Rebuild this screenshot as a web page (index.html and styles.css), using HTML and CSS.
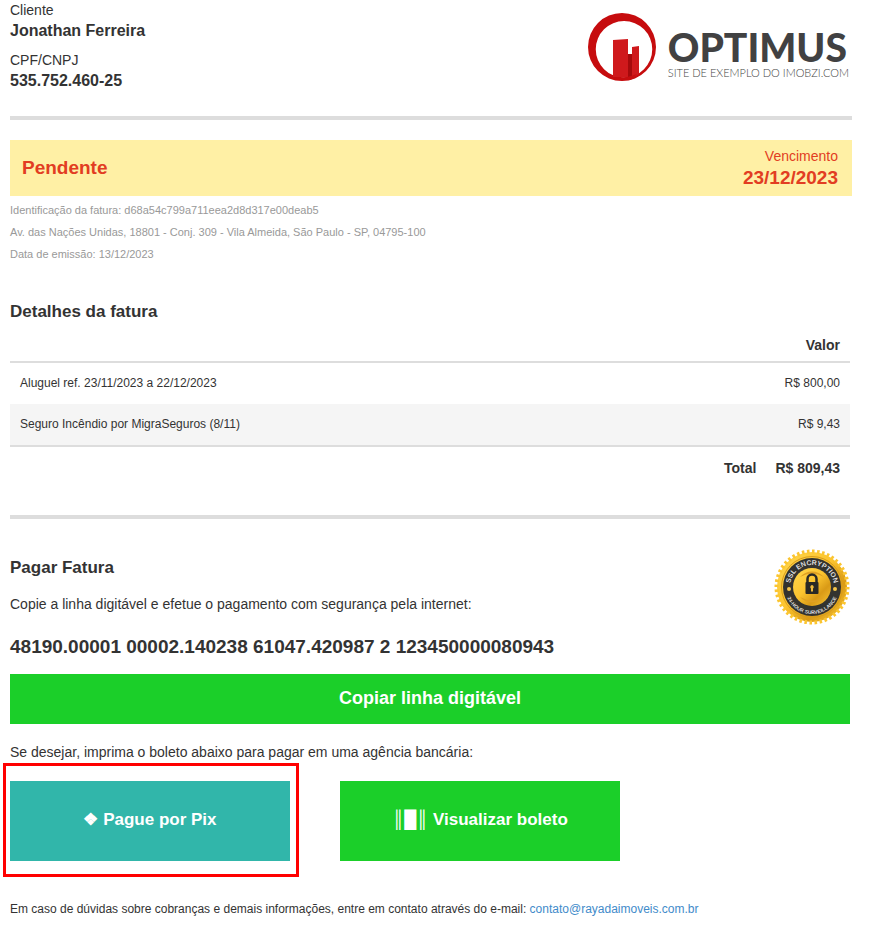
FILE: index.html
```html
<!DOCTYPE html>
<html lang="pt-BR">
<head>
<meta charset="utf-8">
<meta name="viewport" content="width=device-width, initial-scale=1">
<title>Fatura</title>
<link rel="stylesheet" href="styles.css">
</head>
<body>
<main class="page">
  <header class="header">
    <dl class="client">
      <dt>Cliente</dt><dd>Jonathan Ferreira</dd>
      <dt>CPF/CNPJ</dt><dd>535.752.460-25</dd>
    </dl>
    <div class="brand">
      <svg class="brand-mark" viewBox="0 0 68 68" aria-hidden="true">
        <defs><clipPath id="disc"><circle cx="34" cy="34" r="34"/></clipPath></defs>
        <path fill="#c60c0e" fill-rule="evenodd" d="M34 0a34 34 0 1 0 0 68a34 34 0 0 0 0-68zM36 8a28 28 0 1 1 0 56.500a28 28 0 0 1 0-56.500z"/>
        <g clip-path="url(#disc)">
          <path fill="#cf191c" d="M25 27l15-1v38H25z"/>
          <path fill="#a50a0c" d="M40 41h4v24h-4z"/>
          <path fill="#cf191c" d="M44 34l7-1v28l-7 4z"/>
          <path fill="#c60c0e" d="M25 64q12 2 24-3l-6 6H28z"/>
        </g>
      </svg>
      <div class="brand-text">
        <span class="brand-name">OPTIMUS</span>
        <span class="brand-tag">SITE DE EXEMPLO DO IMOBZI.COM</span>
      </div>
    </div>
  </header>

  <section class="status">
    <strong class="status-name">Pendente</strong>
    <div class="due"><span>Vencimento</span><strong>23/12/2023</strong></div>
  </section>
  <div class="meta">
    <p>Identificação da fatura: d68a54c799a711eea2d8d317e00deab5</p>
    <p>Av. das Nações Unidas, 18801 - Conj. 309 - Vila Almeida, São Paulo - SP, 04795-100</p>
    <p>Data de emissão: 13/12/2023</p>
  </div>

  <section class="details">
    <h2>Detalhes da fatura</h2>
    <table>
      <thead><tr><th></th><th>Valor</th></tr></thead>
      <tbody>
        <tr><td>Aluguel ref. 23/11/2023 a 22/12/2023</td><td>R$ 800,00</td></tr>
        <tr><td>Seguro Incêndio por MigraSeguros (8/11)</td><td>R$ 9,43</td></tr>
      </tbody>
      <tfoot><tr><th scope="row">Total</th><td>R$ 809,43</td></tr></tfoot>
    </table>
  </section>

  <section class="pay">
    <div class="pay-head">
      <div>
        <h2>Pagar Fatura</h2>
        <p>Copie a linha digitável e efetue o pagamento com segurança pela internet:</p>
      </div>
      <svg class="seal" viewBox="0 0 76 76" role="img" aria-label="SSL Encryption">
        <defs>
          <linearGradient id="gold" x1="0" y1="0" x2="1" y2="1">
            <stop offset="0" stop-color="#ffd84e"/><stop offset=".45" stop-color="#fbc42f"/><stop offset=".7" stop-color="#d99a16"/><stop offset="1" stop-color="#fbc835"/>
          </linearGradient>
          <path id="arc-top" d="M16 38a22 22 0 0 1 44 0"/>
          <path id="arc-bottom" d="M11 38a27 27 0 0 0 54 0"/>
        </defs>
        <circle cx="38" cy="38" r="35" fill="url(#gold)"/>
        <circle class="seal-teeth" cx="38" cy="38" r="35.500" pathLength="176"/>
        <circle cx="38" cy="38" r="30.500" fill="none" stroke="#d99c1b"/>
        <circle cx="38" cy="38" r="29" fill="#33332f"/>
        <circle cx="38" cy="38" r="19" fill="url(#gold)"/>
        <path d="M26 28a16 16 0 0 1 24 0q-12-7-24 0zM26 48a16 16 0 0 0 24 0q-12 7-24 0z" fill="#dfa023"/>
        <circle cx="15" cy="40" r="2" fill="#f5c64b"/><circle cx="61" cy="40" r="2" fill="#f5c64b"/>
        <text class="seal-top"><textPath href="#arc-top" startOffset="50%">SSL ENCRYPTION</textPath></text>
        <text class="seal-bottom"><textPath href="#arc-bottom" startOffset="50%">24-HOUR SURVEILLANCE</textPath></text>
        <path d="M33.500 34v-4a4.500 4.500 0 0 1 9 0v4" fill="none" stroke="#292925" stroke-width="2.500"/>
        <rect x="31.500" y="33" width="13" height="12" rx="1" fill="#292925"/>
        <path d="M38 36a2 2 0 0 1 1 3.500v3h-2v-3a2 2 0 0 1 1-3.500z" fill="#efba3c"/>
      </svg>
    </div>
    <p class="code">48190.00001 00002.140238 61047.420987 2 123450000080943</p>
    <button class="btn btn-copy" type="button">Copiar linha digitável</button>
    <p class="print">Se desejar, imprima o boleto abaixo para pagar em uma agência bancária:</p>
    <div class="actions">
      <div class="highlight"><button class="btn btn-large btn-pix" type="button">❖ Pague por Pix</button></div>
      <button class="btn btn-large" type="button">║█║ Visualizar boleto</button>
    </div>
  </section>
  <footer>Em caso de dúvidas sobre cobranças e demais informações, entre em contato através do e-mail: <a href="mailto:contato@rayadaimoveis.com.br">contato@rayadaimoveis.com.br</a></footer>
</main>
</body>
</html>
```
FILE: styles.css
```css
* { box-sizing: border-box; }
body { margin: 0; background: #fff; color: #333; font: 14px/20px "Liberation Sans", Arial, sans-serif; }
p, h2, dl, dd { margin: 0; }
h2 { font-size: 17px; line-height: 20px; }
.page { padding: 0 20px 24px 10px; }

.header { display: flex; justify-content: space-between; height: 120px; border-bottom: 4px solid #ddd; }
.client dd { margin-bottom: 8px; font-size: 16px; line-height: 22px; font-weight: bold; }
.brand { display: flex; gap: 12px; padding: 13px 3px 0 0; }
.brand-mark { width: 68px; height: 68px; }
.brand-text { display: flex; flex-direction: column; min-width: 180px; padding-top: 15px; font-family: Lato, sans-serif; white-space: nowrap; }
.brand-name { color: #414142; font-size: 39px; line-height: 38px; font-weight: 900; }
.brand-tag { color: #444; font-size: 11px; line-height: 13px; font-weight: 300; text-align: right; }

.status { display: flex; align-items: center; justify-content: space-between; height: 56px; margin-top: 20px; padding: 0 14px 0 12px; background: #fff0a5; color: #e23d22; }
.status strong { font-size: 19px; line-height: 24px; }
.due { display: flex; flex-direction: column; align-items: flex-end; }
.meta { padding-top: 3px; color: #999; font-size: 11px; line-height: 22px; }

.details { margin: 37px 2px 0 0; padding-bottom: 27px; border-bottom: 4px solid #ddd; }
table { width: 100%; margin-top: 8px; border-collapse: collapse; }
th, td { height: 42px; padding: 0 10px; text-align: left; }
thead th { height: 32px; padding-bottom: 2px; }
tbody td { padding-bottom: 2px; font-size: 12px; }
thead th:last-child, td:last-child, tfoot th { text-align: right; }
thead tr, tbody { border-bottom: 2px solid #ddd; }
tbody tr:nth-child(even) { background: #f5f5f5; }
tfoot td { width: 84px; font-weight: bold; white-space: nowrap; }
tfoot th { padding-right: 9px; }

.pay { margin-right: 2px; padding-top: 30px; }
.pay-head { display: flex; justify-content: space-between; gap: 20px; height: 76px; }
.pay-head h2 { margin: 9px 0 16px; }
.seal { width: 76px; height: 76px; flex: none; }
.seal-teeth { fill: none; stroke: #fbc530; stroke-width: 4px; stroke-dasharray: 2 2; }
.seal text { font: bold 7px "Liberation Sans", sans-serif; fill: #ddd; text-anchor: middle; }
.seal .seal-bottom { font-size: 5px; }
.code { margin-top: 10px; font-size: 19px; line-height: 24px; font-weight: bold; }
.btn { display: block; border: 0; padding: 0 0 2px; background: #1bcf29; color: #fff; font: bold 18px/24px "Liberation Sans", Arial, sans-serif; cursor: pointer; }
.btn-copy { width: 100%; height: 50px; margin-top: 15px; }
.print { margin-top: 18px; }
.actions { display: flex; gap: 50px; margin-top: 19px; }
.btn-large { width: 280px; height: 80px; font-size: 17px; }
.btn-pix { background: #31b6aa; }
.highlight { position: relative; }
.highlight::after { content: ""; position: absolute; inset: -18px -9px -16px -7px; border: 3px solid #f00; pointer-events: none; }
footer { margin-top: 38px; font-size: 12px; }
a { color: #428bca; text-decoration: none; }
```
